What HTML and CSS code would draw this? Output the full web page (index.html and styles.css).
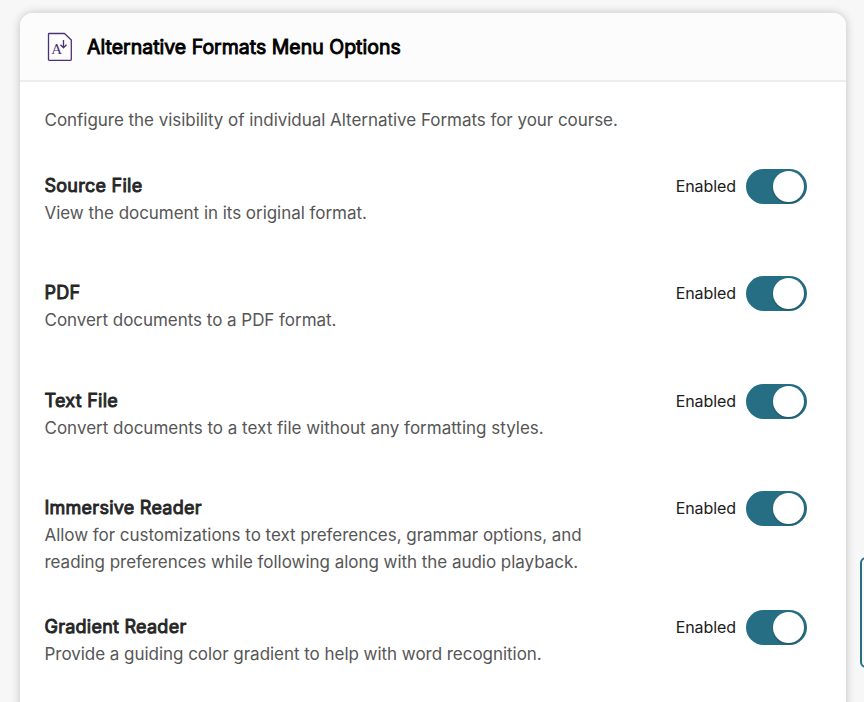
FILE: index.html
```html
<!DOCTYPE html>
<html lang="en">
<head>
<meta charset="utf-8">
<title>Alternative Formats Menu Options</title>
<link rel="stylesheet" href="styles.css">
</head>
<body>
<main class="card">
  <header class="card-header">
    <svg class="doc-icon" viewBox="0 0 26 30" fill="none" stroke="#4b3278" stroke-width="1.300" stroke-linejoin="round">
      <path d="M2 1.500H17.500L24.300 8V27.500Q24.300 28.300 23.500 28.300H2.300Q1.500 28.300 1.500 27.500V2.300Q1.500 1.500 2 1.500Z"/>
      <text class="doc-letter" x="4.200" y="22">A</text>
      <path d="M16.500 8V16M13.500 12.700L16.500 15.700L19.500 12.700"/>
    </svg>
    <h1>Alternative Formats Menu Options</h1>
  </header>
  <div class="card-body">
    <p class="intro">Configure the visibility of individual Alternative Formats for your course.</p>
    <section class="option"><div class="copy"><h2>Source File</h2><p>View the document in its original format.</p></div><div class="control"><span>Enabled</span><i class="switch"></i></div></section>
    <section class="option"><div class="copy"><h2>PDF</h2><p>Convert documents to a PDF format.</p></div><div class="control"><span>Enabled</span><i class="switch"></i></div></section>
    <section class="option"><div class="copy"><h2>Text File</h2><p class="roomy">Convert documents to a text file without any formatting styles.</p></div><div class="control"><span>Enabled</span><i class="switch"></i></div></section>
    <section class="option tall"><div class="copy"><h2>Immersive Reader</h2><p>Allow for customizations to text preferences, grammar options, and<br>reading preferences while following along with the audio playback.</p></div><div class="control"><span>Enabled</span><i class="switch"></i></div></section>
    <section class="option"><div class="copy"><h2>Gradient Reader</h2><p>Provide a guiding color gradient to help with word recognition.</p></div><div class="control"><span>Enabled</span><i class="switch"></i></div></section>
  </div>
</main>
<div class="side-tab"></div>
</body>
</html>
```
FILE: styles.css
```css
* { box-sizing: border-box; }
body { margin: 0; height: 702px; overflow: hidden; background: #f7f7f7; font-family: Inter, sans-serif; padding: 13px 18px 0 20px; }
.card { height: 720px; background: #fff; border-radius: 13px; box-shadow: 0 0 10px rgba(0,0,0,.22); overflow: hidden; }
.card-header { height: 69px; display: flex; align-items: center; gap: 14px; padding-left: 27px; background: #fcfcfc; border-bottom: 2px solid #ededed; }
.doc-icon { width: 26px; height: 30px; }
.doc-letter { font: 15px "Liberation Serif", serif; fill: #4b3278; stroke: none; }
h1, h2, p { margin: 0; }
h1 { font-size: 19.500px; font-weight: 400; -webkit-text-stroke: .9px #000; letter-spacing: 0; color: #000; white-space: nowrap; }
.card-body { padding: 25px 39px 0 24.500px; }
p { font-size: 17px; letter-spacing: -.035px; line-height: 27px; color: #565656; white-space: nowrap; }
.roomy { letter-spacing: 0; }
.intro { margin-bottom: 38px; }
.option { height: 107.400px; display: flex; justify-content: space-between; }
.option.tall { height: 119px; }
h2 { font-size: 18px; line-height: 27px; height: 28px; font-weight: 400; -webkit-text-stroke: .9px #262626; letter-spacing: .25px; color: #262626; }
.control { display: flex; align-items: center; gap: 10px; height: 35px; margin-top: -3px; font-size: 16px; letter-spacing: -.08px; color: #202020; }
.control span { margin-top: -1px; }
.switch { width: 61px; height: 35px; border-radius: 18px; background: #256e84; padding: 2px 3px; display: flex; justify-content: flex-end; }
.switch::after { content: ""; width: 31px; height: 31px; border-radius: 50%; background: #fff; box-shadow: 0 1px 2px rgba(0,0,0,.3); }
.side-tab { position: absolute; left: 860px; top: 557px; width: 20px; height: 111px; border: 2px solid #256e84; border-radius: 6px; background: #f7f7f7; }
```
